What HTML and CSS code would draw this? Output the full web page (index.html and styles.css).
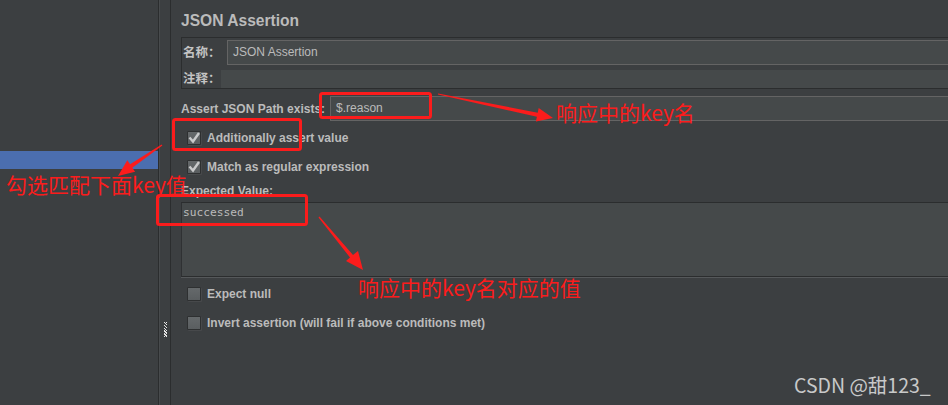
FILE: index.html
```html
<!DOCTYPE html>
<html lang="zh-CN">
<head>
<meta charset="utf-8">
<title>JSON Assertion</title>
<link rel="stylesheet" href="styles.css">
</head>
<body>
<div class="app">
  <aside class="tree"><div class="tree-sel"></div></aside>
  <div class="splitter"><div class="grip"></div></div>
  <main class="panel">
    <h1 class="title">JSON Assertion</h1>
    <div class="namebox">
      <div class="nrow">
        <span class="lbl-cjk lbl-name">名称：</span>
        <div class="field fname">JSON Assertion</div>
      </div>
      <div class="crow">
        <span class="lbl-cjk lbl-comment">注释：</span>
        <div class="field fcomment"></div>
      </div>
    </div>
    <div class="pathrow">
      <span class="lbl">Assert JSON Path exists:</span>
      <div class="field fpath">$.reason</div>
    </div>
    <div class="check first">
      <span class="box on"><svg viewBox="0 0 14 14" width="14" height="14"><path d="M2.5 6.5 L6 10.5 L12 2" fill="none" stroke="#c9cacb" stroke-width="2.4"/></svg></span>
      <span class="lbl">Additionally assert value</span>
    </div>
    <div class="check">
      <span class="box on"><svg viewBox="0 0 14 14" width="14" height="14"><path d="M2.5 6.5 L6 10.5 L12 2" fill="none" stroke="#c9cacb" stroke-width="2.4"/></svg></span>
      <span class="lbl">Match as regular expression</span>
    </div>
    <div class="evlabel lbl">Expected Value:</div>
    <div class="textarea">successed</div>
    <div class="check after-area">
      <span class="box"></span>
      <span class="lbl">Expect null</span>
    </div>
    <div class="check">
      <span class="box"></span>
      <span class="lbl">Invert assertion (will fail if above conditions met)</span>
    </div>
  </main>
</div>

<svg class="annot" width="948" height="405" viewBox="0 0 948 405">
  <g fill="none" stroke="#fb1c1c" stroke-width="3">
    <rect x="320.5" y="93.5" width="110" height="24" rx="2"/>
    <rect x="173.5" y="119.5" width="127" height="30" rx="2"/>
    <rect x="157.5" y="195.5" width="149" height="29" rx="2"/>
  </g>
  <g fill="#fb1c1c">
    <polygon points="438,93.4 537.7,112.7 538.7,107.9 553,118 535.9,121.6 536.9,116.7 438,94.6"/>
    <polygon points="161.6,144.5 130.1,164.3 127.3,160.2 118,176 135.1,171.8 132.3,167.7 162.4,145.5"/>
    <polygon points="318.5,217.4 350,257.5 346,261 363,270 358,251 353,254.9 319.5,216.6"/>
  </g>
</svg>
<span class="note n1">响应中的key名</span>
<span class="note n2">勾选匹配下面key值</span>
<span class="note n3">响应中的key名对应的值</span>
<div class="watermark">CSDN @甜123_</div>
</body>
</html>
```

FILE: styles.css
```css
html, body {
  margin: 0;
  padding: 0;
}
body {
  width: 948px;
  height: 405px;
  overflow: hidden;
  background: #3c3f41;
  position: relative;
  font-family: "Liberation Sans", Arial, sans-serif;
  color: #bbbbbb;
}
.app {
  display: flex;
  height: 405px;
}
.tree {
  width: 158px;
  border-right: 1px solid #2b2d2e;
  background: #3c3f41;
  flex: none;
}
.tree-sel {
  margin-top: 151px;
  height: 18px;
  background: #4b6eaf;
}
.splitter {
  width: 10px;
  flex: none;
  border-left: 1px solid #484b4d;
  border-right: 1px solid #2b2d2e;
  display: flex;
  justify-content: center;
}
.grip {
  margin-top: 322px;
  width: 3px;
  height: 15px;
  background:
    repeating-linear-gradient(45deg, #e8e8e8 0 1px, #3c3f41 1px 2px);
}
.panel {
  flex: 1;
  min-width: 0;
  padding-left: 10px;
  display: flex;
  flex-direction: column;
  overflow: hidden;
}
.title {
  margin: 11px 0 0;
  font-size: 15.6px;
  line-height: 20px;
  font-weight: bold;
  color: #bbbbbb;
}
.lbl {
  font-size: 12px;
  font-weight: bold;
  color: #bbbbbb;
  white-space: nowrap;
}
.lbl-cjk {
  font-family: "Liberation Sans", "Noto Sans CJK SC", sans-serif;
  font-size: 12.5px;
  line-height: 16px;
  font-weight: bold;
  color: #c4c4c4;
  white-space: nowrap;
  flex: none;
  padding-left: 1px;
}
.lbl-name { width: 44px; }
.lbl-comment { width: 38px; }
.namebox {
  margin-top: 6px;
  border: 1px solid #2b2d2e;
  border-right: none;
  padding-top: 2px;
  display: flex;
  flex-direction: column;
  gap: 5px;
}
.nrow, .crow {
  display: flex;
  align-items: center;
}
.nrow { height: 25px; }
.crow { height: 18px; }
.field {
  flex: 1;
  background: #45494a;
  font-size: 12px;
  color: #bbbbbb;
  white-space: nowrap;
  box-sizing: border-box;
}
.fname {
  height: 25px;
  line-height: 23px;
  border: 1px solid #646464;
  border-right: none;
  padding-left: 5px;
}
.fcomment {
  height: 18px;
}
.pathrow {
  margin-top: 7px;
  display: flex;
  align-items: center;
  gap: 5px;
}
.fpath {
  height: 25px;
  line-height: 23px;
  border: 1px solid #646464;
  border-right: none;
  padding-left: 5px;
}
.check {
  height: 29px;
  display: flex;
  align-items: center;
  gap: 6px;
  padding-left: 6px;
}
.check.first { margin-top: 2px; }
.check.after-area { margin-top: 2px; }
.box {
  width: 14px;
  height: 14px;
  box-sizing: border-box;
  flex: none;
  border: 1px solid #2e3031;
  border-radius: 1px;
  background: linear-gradient(#65696b, #5a5e60);
  box-shadow: 1px 1px 0 #47494b;
  position: relative;
}
.box svg {
  position: absolute;
  left: -1px;
  top: -1px;
}
.evlabel {
  height: 21px;
  line-height: 21px;
}
.textarea {
  height: 75px;
  box-sizing: border-box;
  background: #45494a;
  border-top: 1px solid #2b2d2e;
  border-left: 1px solid #2f3133;
  border-bottom: 1px solid #2b2d2e;
  box-shadow: 0 1px 0 #55585a;
  padding: 3px 0 0 1px;
  font-family: "DejaVu Sans Mono", monospace;
  font-size: 11.2px;
  line-height: 14px;
  color: #bbbbbb;
}
.annot {
  position: absolute;
  left: 0;
  top: 0;
  pointer-events: none;
}
.note {
  position: absolute;
  font-family: "Noto Sans CJK SC", sans-serif;
  font-size: 21px;
  line-height: 21px;
  color: #fb1c1c;
  white-space: nowrap;
}
.n1 { left: 556px; top: 102px; }
.n2 { left: 6px; top: 174px; }
.n3 { left: 358px; top: 277px; }
.watermark {
  position: absolute;
  left: 794px;
  top: 373px;
  font-family: "Noto Sans CJK SC", sans-serif;
  font-size: 19.5px;
  line-height: 24px;
  color: #c8c9c9;
  white-space: nowrap;
}
```
